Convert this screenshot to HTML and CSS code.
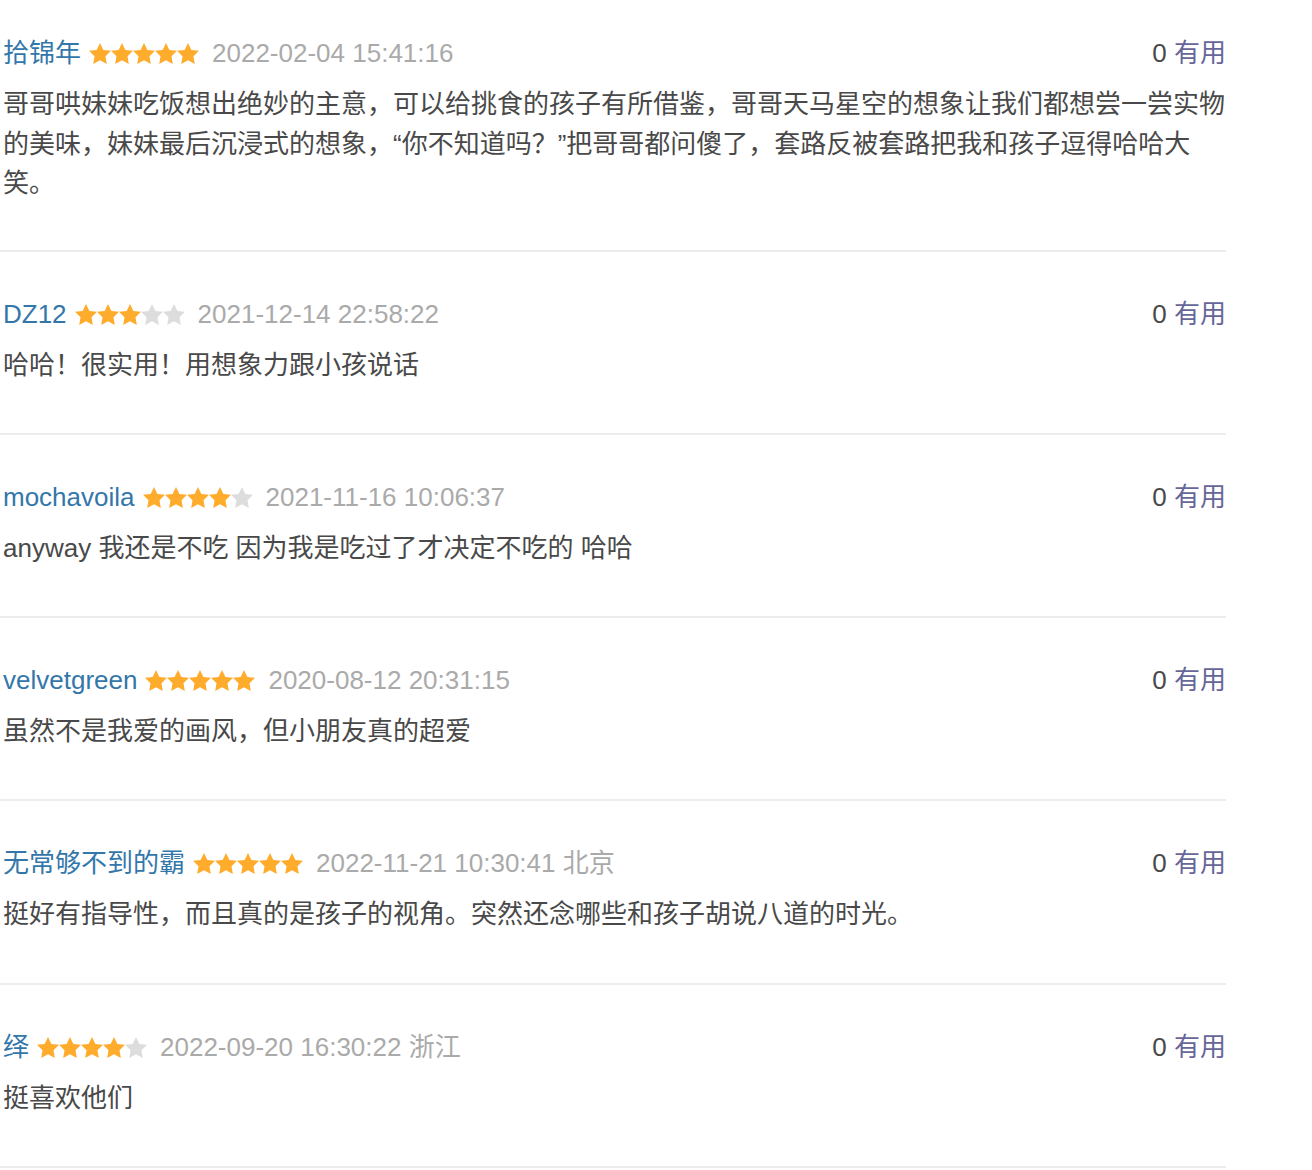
FILE: index.html
```html
<!DOCTYPE html>
<html lang="zh-CN">
<head>
<meta charset="utf-8">
<title>短评</title>
<link rel="stylesheet" href="styles.css">
</head>
<body>
<svg class="defs" width="0" height="0" aria-hidden="true">
  <defs>
    <symbol id="star" viewBox="0 0 22 21">
      <polygon points="11,0 14.4,6.9 22,7.8 16.5,13.2 17.8,21 11,17.3 4.2,21 5.5,13.2 0,7.8 7.6,6.9"/>
    </symbol>
  </defs>
</svg>
<div class="list">
  <div class="item first">
    <div class="head">
      <div class="info">
        <a class="name" href="#">拾锦年</a>
        <span class="stars">
          <svg class="star on"><use href="#star"/></svg><svg class="star on"><use href="#star"/></svg><svg class="star on"><use href="#star"/></svg><svg class="star on"><use href="#star"/></svg><svg class="star on"><use href="#star"/></svg>
        </span>
        <span class="time">2022-02-04 15:41:16</span>
      </div>
      <div class="vote"><span class="count">0</span> <a class="useful" href="#">有用</a></div>
    </div>
    <p class="text">哥哥哄妹妹吃饭想出绝妙的主意，可以给挑食的孩子有所借鉴，哥哥天马星空的想象让我们都想尝一尝实物的美味，妹妹最后沉浸式的想象，“你不知道吗？”把哥哥都问傻了，套路反被套路把我和孩子逗得哈哈大笑。</p>
  </div>

  <div class="item">
    <div class="head">
      <div class="info">
        <a class="name" href="#">DZ12</a>
        <span class="stars">
          <svg class="star on"><use href="#star"/></svg><svg class="star on"><use href="#star"/></svg><svg class="star on"><use href="#star"/></svg><svg class="star off"><use href="#star"/></svg><svg class="star off"><use href="#star"/></svg>
        </span>
        <span class="time">2021-12-14 22:58:22</span>
      </div>
      <div class="vote"><span class="count">0</span> <a class="useful" href="#">有用</a></div>
    </div>
    <p class="text">哈哈！很实用！用想象力跟小孩说话</p>
  </div>

  <div class="item">
    <div class="head">
      <div class="info">
        <a class="name" href="#">mochavoila</a>
        <span class="stars">
          <svg class="star on"><use href="#star"/></svg><svg class="star on"><use href="#star"/></svg><svg class="star on"><use href="#star"/></svg><svg class="star on"><use href="#star"/></svg><svg class="star off"><use href="#star"/></svg>
        </span>
        <span class="time">2021-11-16 10:06:37</span>
      </div>
      <div class="vote"><span class="count">0</span> <a class="useful" href="#">有用</a></div>
    </div>
    <p class="text">anyway 我还是不吃 因为我是吃过了才决定不吃的 哈哈</p>
  </div>

  <div class="item">
    <div class="head">
      <div class="info">
        <a class="name" href="#">velvetgreen</a>
        <span class="stars">
          <svg class="star on"><use href="#star"/></svg><svg class="star on"><use href="#star"/></svg><svg class="star on"><use href="#star"/></svg><svg class="star on"><use href="#star"/></svg><svg class="star on"><use href="#star"/></svg>
        </span>
        <span class="time">2020-08-12 20:31:15</span>
      </div>
      <div class="vote"><span class="count">0</span> <a class="useful" href="#">有用</a></div>
    </div>
    <p class="text">虽然不是我爱的画风，但小朋友真的超爱</p>
  </div>

  <div class="item">
    <div class="head">
      <div class="info">
        <a class="name" href="#">无常够不到的霸</a>
        <span class="stars">
          <svg class="star on"><use href="#star"/></svg><svg class="star on"><use href="#star"/></svg><svg class="star on"><use href="#star"/></svg><svg class="star on"><use href="#star"/></svg><svg class="star on"><use href="#star"/></svg>
        </span>
        <span class="time">2022-11-21 10:30:41 北京</span>
      </div>
      <div class="vote"><span class="count">0</span> <a class="useful" href="#">有用</a></div>
    </div>
    <p class="text">挺好有指导性，而且真的是孩子的视角。突然还念哪些和孩子胡说八道的时光。</p>
  </div>

  <div class="item">
    <div class="head">
      <div class="info">
        <a class="name" href="#">绎</a>
        <span class="stars">
          <svg class="star on"><use href="#star"/></svg><svg class="star on"><use href="#star"/></svg><svg class="star on"><use href="#star"/></svg><svg class="star on"><use href="#star"/></svg><svg class="star off"><use href="#star"/></svg>
        </span>
        <span class="time">2022-09-20 16:30:22 浙江</span>
      </div>
      <div class="vote"><span class="count">0</span> <a class="useful" href="#">有用</a></div>
    </div>
    <p class="text">挺喜欢他们</p>
  </div>
</div>
</body>
</html>
```

FILE: styles.css
```css
html, body {
  margin: 0;
  padding: 0;
  background: #ffffff;
}

body {
  font-family: "Liberation Sans", "Noto Sans CJK SC", sans-serif;
  font-size: 26px;
  color: #494949;
}

.defs {
  position: absolute;
  width: 0;
  height: 0;
}

.list {
  width: 1226px;
}

.item {
  padding: 43px 0 48.25px 3px;
  border-bottom: 2px solid #ececec;
}

.item.first {
  padding-top: 34px;
  padding-bottom: 46px;
}

.head {
  display: flex;
  justify-content: space-between;
  align-items: center;
  height: 39px;
  line-height: 39px;
}

.info {
  display: flex;
  align-items: center;
  white-space: nowrap;
}

.name {
  color: #3377aa;
  text-decoration: none;
}

.stars {
  display: flex;
  align-items: center;
  margin: 0 13px 0 8px;
}

.star {
  width: 22px;
  height: 21px;
  display: block;
}

.star.on {
  fill: #ffac2d;
}

.star.off {
  fill: #dddddd;
}

.time {
  color: #aaaaaa;
}

.vote {
  white-space: nowrap;
}

.count {
  color: #494949;
}

.useful {
  color: #666699;
  text-decoration: none;
}

.text {
  margin: 12px 0 0 0;
  line-height: 39px;
  color: #494949;
}

.item.first .text {
  line-height: 39.5px;
}
```
